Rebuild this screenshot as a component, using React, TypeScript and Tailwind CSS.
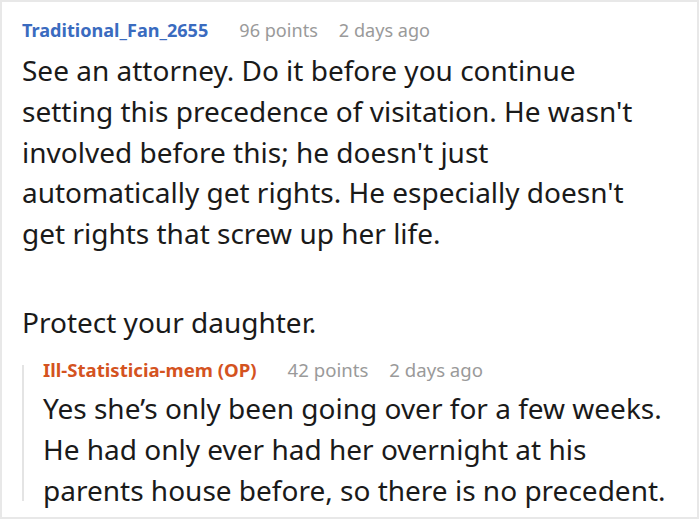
export default function App() {
  const font = { fontFamily: '"Noto Sans", "Open Sans", sans-serif' };
  return (
    <div className="w-[700px] h-[520px] bg-white overflow-hidden" style={font}>
      <div className="w-[699px] h-[519px] border-2 border-[#e8e8e8] pl-[20px] pt-[14px]">
        {/* top-level comment */}
        <div className="flex items-baseline text-[18.1px] leading-[28px] whitespace-nowrap">
          <span className="font-bold text-[#3a6bbf]">Traditional_Fan_2655</span>
          <span className="ml-[31px] text-[#9a9a9a]">96 points</span>
          <span className="ml-[21px] text-[#9a9a9a]">2 days ago</span>
        </div>
        <div className="mt-[6px] text-[28px] leading-[40.75px] text-[#1a1a1a] whitespace-nowrap">
          <p>
            See an attorney. Do it before you continue
            <br />
            setting this precedence of visitation. He wasn't
            <br />
            involved before this; he doesn't just
            <br />
            automatically get rights. He especially doesn't
            <br />
            get rights that screw up her life.
          </p>
          <p className="mt-[48px]">Protect your daughter.</p>
        </div>

        {/* reply thread */}
        <div className="mt-[22px] flex flex-col border-l-2 border-[#e4e4e4] pl-[19px]">
          <div className="-mt-[5px] flex items-baseline text-[18.6px] leading-[20px] whitespace-nowrap">
            <span className="font-bold text-[#d4531f]">Ill-Statisticia-mem (OP)</span>
            <span className="ml-[31px] text-[#9a9a9a]">42 points</span>
            <span className="ml-[21px] text-[#9a9a9a]">2 days ago</span>
          </div>
          <div className="mt-[8px] -mb-[10px] text-[28px] leading-[41px] text-[#1a1a1a] whitespace-nowrap">
            Yes she’s only been going over for a few weeks.
            <br />
            He had only ever had her overnight at his
            <br />
            parents house before, so there is no precedent.
          </div>
        </div>
      </div>
    </div>
  );
}
